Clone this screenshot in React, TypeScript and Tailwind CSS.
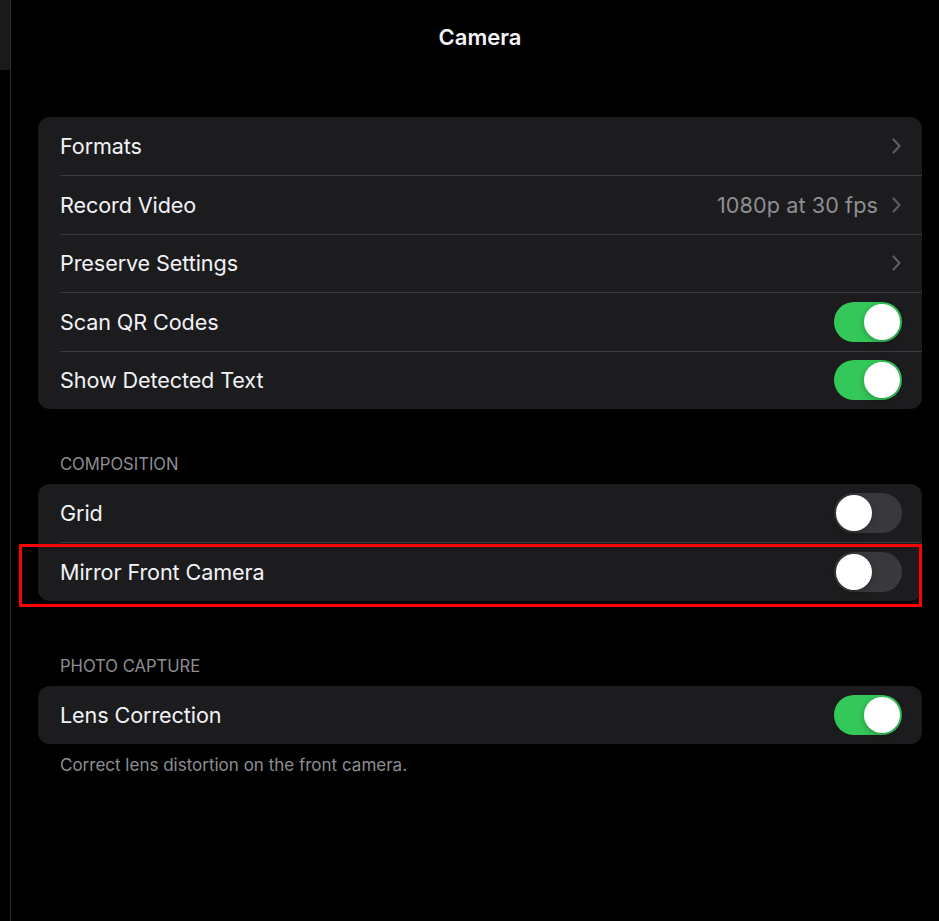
import React from "react";

const font = { fontFamily: "Inter, 'Liberation Sans', sans-serif" };

const Chevron = () => (
  <svg width="11" height="16" viewBox="0 0 11 16" className="shrink-0">
    <path d="M2.5 1.5 L8.5 8 L2.5 14.5" fill="none" stroke="#5c5c60" strokeWidth="2.2" strokeLinecap="round" strokeLinejoin="round" />
  </svg>
);

const Toggle = ({ on }: { on: boolean }) => (
  <div
    className={`w-[68px] h-[40px] rounded-full p-[2px] flex items-center ${on ? "bg-[#34c759] justify-end" : "bg-[#39393d] justify-start"}`}
  >
    <div className="w-[36px] h-[36px] rounded-full bg-white shadow-[0_2px_6px_rgba(0,0,0,0.25)]" />
  </div>
);

type Row = { label: string; value?: string; chevron?: boolean; toggle?: boolean; on?: boolean };

const Card = ({ rows, rowH }: { rows: Row[]; rowH: string }) => (
  <div className="bg-[#1c1c1e] rounded-[12px] overflow-hidden">
    {rows.map((r, i) => (
      <div key={r.label} className={`${rowH} pl-[22px] flex items-center`}>
        <div
          className={`h-full flex-1 flex items-center pr-[20px] ${i > 0 ? "border-t border-[#38383a]" : ""}`}
        >
          <span className="flex-1 text-[21.6px] text-[#f2f2f7] tracking-[-0.1px]">{r.label}</span>
          {r.value && <span className="text-[21.6px] text-[#8e8e93] mr-[13px] tracking-[0.1px]">{r.value}</span>}
          {r.chevron && <Chevron />}
          {r.toggle && <Toggle on={!!r.on} />}
        </div>
      </div>
    ))}
  </div>
);

export default function App() {
  return (
    <div className="w-[939px] h-[921px] bg-black flex overflow-hidden" style={font}>
      <div className="w-[10px] flex flex-col shrink-0">
        <div className="h-[70px] bg-[#1a1a1a]" />
      </div>
      <div className="w-[1px] bg-[#2c2c2e] shrink-0" />
      <div className="flex-1 pl-[27px] pr-[17px]">
        <div className="h-[75px] flex items-center justify-center">
          <span className="text-[22px] font-semibold text-[#f5f5f7]">Camera</span>
        </div>
        <div className="mt-[42px]">
          <Card
            rowH="h-[58.4px]"
            rows={[
              { label: "Formats", chevron: true },
              { label: "Record Video", value: "1080p at 30 fps", chevron: true },
              { label: "Preserve Settings", chevron: true },
              { label: "Scan QR Codes", toggle: true, on: true },
              { label: "Show Detected Text", toggle: true, on: true },
            ]}
          />
        </div>
        <div className="mt-[45px] pl-[22px] text-[16.6px] leading-[20px] text-[#8e8e93] uppercase">Composition</div>
        <div className="mt-[10px] relative">
          <Card
            rowH="h-[58.5px]"
            rows={[
              { label: "Grid", toggle: true, on: false },
              { label: "Mirror Front Camera", toggle: true, on: false },
            ]}
          />
          <div className="absolute left-[-19px] right-0 top-[60px] h-[63px] border-[3.5px] border-[#ff0000] pointer-events-none" />
        </div>
        <div className="mt-[55px] pl-[22px] text-[16.6px] leading-[20px] text-[#8e8e93] uppercase">Photo Capture</div>
        <div className="mt-[10px]">
          <Card rowH="h-[58px]" rows={[{ label: "Lens Correction", toggle: true, on: true }]} />
        </div>
        <div className="mt-[11px] pl-[22px] text-[17px] leading-[20px] text-[#8e8e93]">
          Correct lens distortion on the front camera.
        </div>
      </div>
    </div>
  );
}
